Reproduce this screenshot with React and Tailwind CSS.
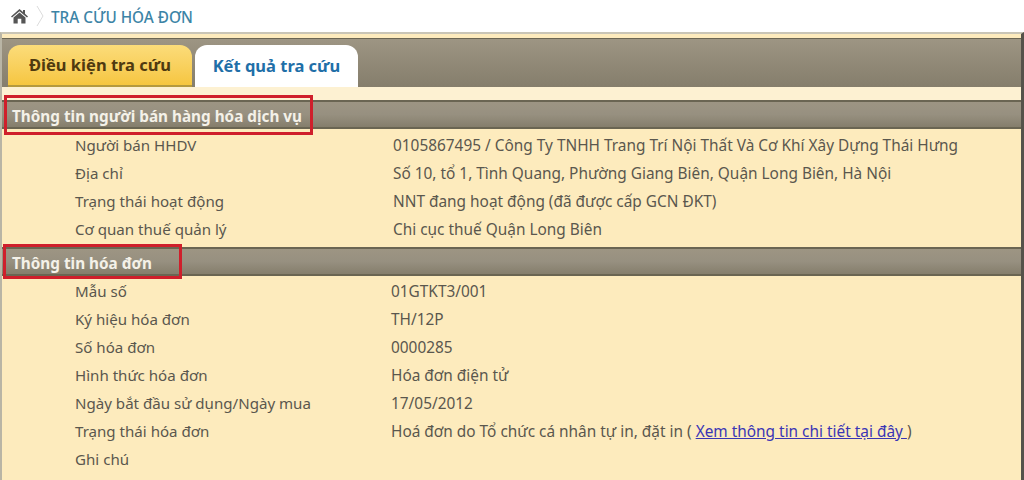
const seller = [
  ['Người bán HHDV', '0105867495 / Công Ty TNHH Trang Trí Nội Thất Và Cơ Khí Xây Dựng Thái Hưng'],
  ['Địa chỉ', 'Số 10, tổ 1, Tình Quang, Phường Giang Biên, Quận Long Biên, Hà Nội'],
  ['Trạng thái hoạt động', 'NNT đang hoạt động (đã được cấp GCN ĐKT)'],
  ['Cơ quan thuế quản lý', 'Chi cục thuế Quận Long Biên'],
]

const invoice = [
  ['Mẫu số', '01GTKT3/001'],
  ['Ký hiệu hóa đơn', 'TH/12P'],
  ['Số hóa đơn', '0000285'],
  ['Hình thức hóa đơn', 'Hóa đơn điện tử'],
  ['Ngày bắt đầu sử dụng/Ngày mua', '17/05/2012'],
  [
    'Trạng thái hóa đơn',
    <>
      Hoá đơn do Tổ chức cá nhân tự in, đặt in ({' '}
      <a href="#" className="text-[#3a35b5] underline">Xem thông tin chi tiết tại đây </a>)
    </>,
  ],
  ['Ghi chú', ''],
]

function Row({ label, value, valueLeft }) {
  return (
    <div className="flex h-7 items-baseline text-[15.4px] leading-7 text-[#5a574e]">
      <span className="w-[390px] shrink-0 pl-[73px] text-[15.1px]">{label}</span>
      <span className={valueLeft}>{value}</span>
    </div>
  )
}

function SectionHeader({ title, boxClass }) {
  return (
    <div className="relative h-[29px] border-y-2 border-y-[#6a6552] bg-linear-to-b from-[#9d9583] via-[#979080] to-[#857e6c]">
      <span className="absolute top-[4px] left-[10px] text-[15.3px] leading-[20px] font-bold whitespace-nowrap text-[#f4f1e8]">{title}</span>
      {/* red annotation box */}
      <span className={`absolute border-[3px] border-[#cf1f2b] ${boxClass}`} />
    </div>
  )
}

export default function App() {
  return (
    <div className="h-[480px] w-[1024px] overflow-hidden bg-white font-['Noto_Sans','Liberation_Sans',sans-serif]">
      <div className="flex h-[32px] items-center pl-[11px]">
        <svg width="17" height="16" viewBox="0 0 17 16" fill="#555555">
          <path d="M8.5 1 L12 4 V2 H14 V5.7 L17 8.4 L16 9.6 L8.5 3.2 L1 9.6 L0 8.4 Z" />
          <path d="M8.5 4.6 L14.5 9.6 V15.5 H10.3 V10.8 H6.7 V15.5 H2.5 V9.6 Z" />
        </svg>
        <svg width="10" height="22" viewBox="0 0 10 22" className="mr-[5px] ml-[8px]" fill="none" stroke="#dcdcdc">
          <path d="M1 1 L7 11 L1 21" />
        </svg>
        <span className="mt-[3px] text-[15.3px] leading-none font-medium text-[#3c84a6]">TRA CỨU HÓA ĐƠN</span>
      </div>
      <div className="h-[448px] border-t-2 border-t-[#c9c5b6] border-r-[3px] border-r-[#55524a] border-l-2 border-l-[#b9b5a5] bg-[#fdebbd] pt-[4px]">
        <div className="flex h-[49px] items-end gap-[3px] border-t border-t-[#6a6552] bg-linear-to-b from-[#9d9583] to-[#857e6c] pl-[6px]">
          <div className="flex h-[42px] w-[184px] items-center justify-center rounded-t-xl border-b-2 border-b-[#b59a3e] bg-linear-to-b from-[#fbdc79] to-[#f6c63f] text-[16.5px] font-bold text-[#4f3a10]">
            Điều kiện tra cứu
          </div>
          <div className="flex h-[42px] w-[163px] items-center justify-center rounded-t-xl bg-white text-[16.5px] font-bold text-[#1f6fa8]">
            Kết quả tra cứu
          </div>
        </div>
        <div className="h-[13px] bg-[#fdf1d2]" />
        <SectionHeader title="Thông tin người bán hàng hóa dịch vụ" boxClass="-top-[7px] left-[2px] h-[40px] w-[309px]" />
        <div className="pt-[2px]">
          {seller.map(([label, value]) => (
            <Row key={label} label={label} value={value} valueLeft="pl-[1px]" />
          ))}
        </div>
        <div className="h-[4px]" />
        <SectionHeader title="Thông tin hóa đơn" boxClass="-top-[5px] left-[1px] h-[35px] w-[179px]" />
        <div className="pt-[1px]">
          {invoice.map(([label, value]) => (
            <Row key={label} label={label} value={value} valueLeft="-ml-[1px]" />
          ))}
        </div>
      </div>
    </div>
  )
}
